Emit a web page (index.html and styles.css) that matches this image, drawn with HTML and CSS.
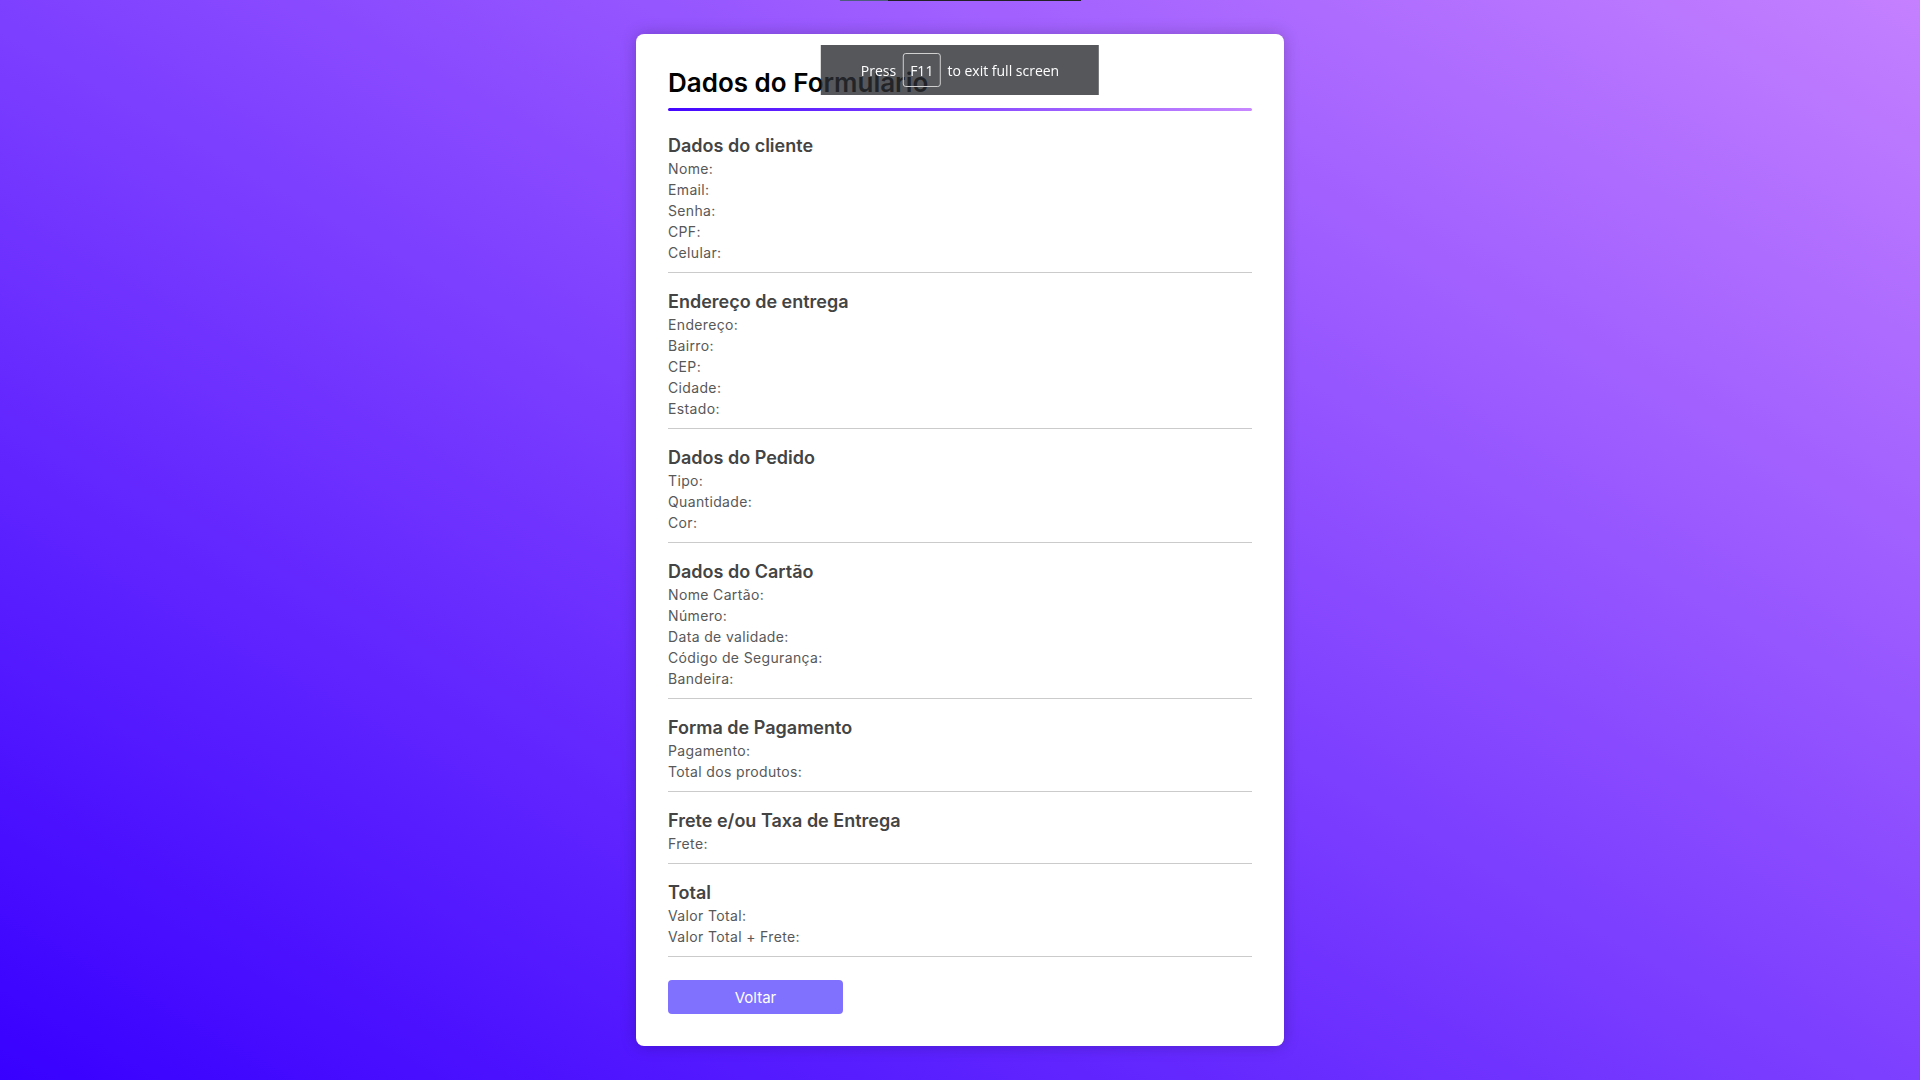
FILE: index.html
```html
<!DOCTYPE html>
<html lang="pt-BR">
<head>
<meta charset="UTF-8">
<title>Dados do Formulário</title>
<link rel="stylesheet" href="styles.css">
</head>
<body>
  <div class="top-strip"><span class="strip-accent"></span></div>
  <main class="card">
    <h1 class="title">Dados do Formulário</h1>
    <div class="title-line"></div>

    <section class="group">
      <h3 class="group-title">Dados do cliente</h3>
      <p class="field">Nome:</p>
      <p class="field">Email:</p>
      <p class="field">Senha:</p>
      <p class="field">CPF:</p>
      <p class="field">Celular:</p>
    </section>

    <section class="group">
      <h3 class="group-title">Endereço de entrega</h3>
      <p class="field">Endereço:</p>
      <p class="field">Bairro:</p>
      <p class="field">CEP:</p>
      <p class="field">Cidade:</p>
      <p class="field">Estado:</p>
    </section>

    <section class="group">
      <h3 class="group-title">Dados do Pedido</h3>
      <p class="field">Tipo:</p>
      <p class="field">Quantidade:</p>
      <p class="field">Cor:</p>
    </section>

    <section class="group">
      <h3 class="group-title">Dados do Cartão</h3>
      <p class="field">Nome Cartão:</p>
      <p class="field">Número:</p>
      <p class="field">Data de validade:</p>
      <p class="field">Código de Segurança:</p>
      <p class="field">Bandeira:</p>
    </section>

    <section class="group">
      <h3 class="group-title">Forma de Pagamento</h3>
      <p class="field">Pagamento:</p>
      <p class="field">Total dos produtos:</p>
    </section>

    <section class="group">
      <h3 class="group-title">Frete e/ou Taxa de Entrega</h3>
      <p class="field">Frete:</p>
    </section>

    <section class="group">
      <h3 class="group-title">Total</h3>
      <p class="field">Valor Total:</p>
      <p class="field">Valor Total + Frete:</p>
    </section>

    <button class="btn-back" type="button">Voltar</button>
  </main>

  <div class="fs-toast">
    <span>Press</span>
    <span class="key">F11</span>
    <span>to exit full screen</span>
  </div>
</body>
</html>
```

FILE: styles.css
```css
* { box-sizing: border-box; }

html, body {
  margin: 0;
  padding: 0;
}

body {
  min-height: 100vh;
  font-family: Inter, "Noto Sans", sans-serif;
  background: linear-gradient(to top right, #3800ff, #c480ff);
  display: flex;
  justify-content: center;
  align-items: flex-start;
  padding-top: 34px;
}

.top-strip {
  position: fixed;
  top: 0;
  left: 840px;
  width: 241px;
  height: 1px;
  background: #222226;
  display: flex;
}

.strip-accent {
  width: 48px;
  height: 1px;
  background: #4d5b7e;
}

.card {
  width: 648px;
  background: #fff;
  border-radius: 8px;
  padding: 32px;
  box-shadow: 0 0 16px rgba(0, 0, 0, 0.22);
}

.title {
  margin: 0;
  font-size: 26px;
  line-height: 34px;
  font-weight: 600;
  color: #000;
}

.title-line {
  height: 3px;
  margin: 8px 0 6px;
  border-radius: 2px;
  background: linear-gradient(to right, #4406ff, #c788ff);
}

.group {
  padding: 17px 0 9px;
  border-bottom: 1px solid #cbcbcb;
}

.group-title {
  margin: 0;
  font-size: 18px;
  line-height: 24px;
  font-weight: 600;
  color: #444;
}

.field {
  margin: 0;
  font-size: 14px;
  line-height: 21px;
  font-weight: 400;
  letter-spacing: 0.35px;
  color: #585858;
}

.btn-back {
  display: block;
  margin-top: 23px;
  width: 175px;
  height: 34px;
  border: none;
  border-radius: 4px;
  background: #8071ff;
  color: #fff;
  font-family: Inter, "Noto Sans", sans-serif;
  font-size: 15px;
  cursor: pointer;
}

.fs-toast {
  position: fixed;
  top: 45px;
  left: 50%;
  transform: translateX(-50%);
  height: 50px;
  padding: 0 40px;
  background: rgba(42, 45, 50, 0.8);
  color: #fff;
  font-family: "Open Sans", "Noto Sans", sans-serif;
  font-size: 14px;
  display: flex;
  align-items: center;
  gap: 7px;
}

.key {
  border: 1px solid #d0d0d0;
  border-radius: 3px;
  height: 34px;
  padding: 0 6px;
  display: flex;
  align-items: center;
}
```
